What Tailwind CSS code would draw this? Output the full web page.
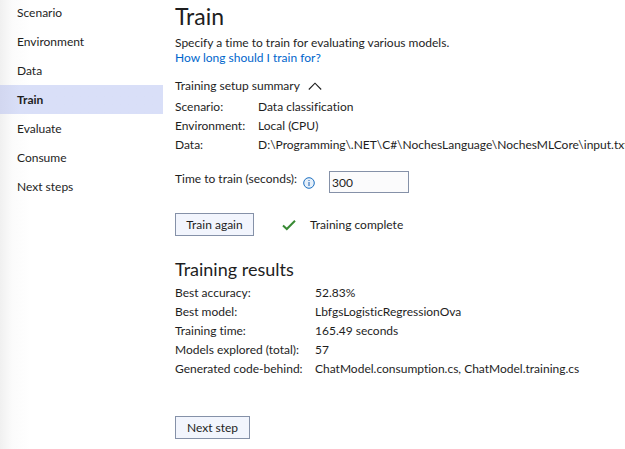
<!DOCTYPE html>
<html lang="en">
<head>
    <meta charset="UTF-8">
    <meta name="viewport" content="width=device-width, initial-scale=1.0">
    <title>Model Builder | Train</title>
    <script src="https://cdn.jsdelivr.net/npm/@tailwindcss/browser@4"></script>
</head>
<body class="bg-white text-[#1e1e1e] text-[12px] leading-[19px] font-['Lato','Open_Sans',sans-serif] [font-variant-ligatures:none]">

<div class="flex min-h-screen overflow-hidden">
    <nav class="w-[163px] shrink-0 bg-linear-to-r from-[#f0f0f0] via-[#fbfbfb] via-[12px] to-white to-[30px]">
        <ul class="-mt-0.5 leading-[29px]">
            <li><a href="#scenario" class="block pl-[17px]">Scenario</a></li>
            <li><a href="#environment" class="block pl-[17px]">Environment</a></li>
            <li><a href="#data" class="block pl-[17px]">Data</a></li>
            <li><a href="#train" aria-current="page" class="block pl-[17px] font-bold bg-linear-to-r from-[#d2d7f0] to-[#d9dff8] to-[20px]">Train</a></li>
            <li><a href="#evaluate" class="block pl-[17px]">Evaluate</a></li>
            <li><a href="#consume" class="block pl-[17px]">Consume</a></li>
            <li><a href="#next-steps" class="block pl-[17px]">Next steps</a></li>
        </ul>
    </nav>

    <main class="flex-1 min-w-0 pl-3 pt-0.5 whitespace-nowrap">
        <h1 class="text-[23px] leading-7">Train</h1>
        <div class="mt-[5px] leading-[15px]">
            <p>Specify a time to train for evaluating various models.</p>
            <a href="#help" class="block w-fit text-[#0066cc]">How long should I train for?</a>
        </div>

        <button type="button" aria-expanded="true" class="mt-2.5 flex h-5 items-center gap-2">
            Training setup summary
            <svg class="h-3.5 w-3.5" viewBox="0 0 14 14" fill="none" stroke="#1e1e1e" stroke-width="1.1">
                <path d="M.8 11.5 7 5.2l6.2 6.3"/>
            </svg>
        </button>
        <dl class="mt-0.5 grid grid-cols-[83px_1fr]">
            <dt>Scenario:</dt>
            <dd>Data classification</dd>
            <dt>Environment:</dt>
            <dd>Local (CPU)</dd>
            <dt>Data:</dt>
            <dd>D:\Programming\.NET\C#\NochesLanguage\NochesMLCore\input.txt</dd>
        </dl>

        <div class="mt-[17px] flex h-[22px]">
            <div class="flex w-[154px] justify-between pr-3.5">
                <label for="train-time" class="leading-4">Time to train (seconds):</label>
                <svg class="mt-1.5 h-3 w-3 shrink-0" viewBox="0 0 12 12" fill="none">
                    <circle cx="6" cy="6" r="5.3" fill="#e6f0fa" stroke="#1c6fc0"/>
                    <path d="M6 5v4M6 3v1" stroke="#1c5fb0"/>
                </svg>
            </div>
            <input id="train-time" type="text" value="300" class="w-20 border border-[#8591a8] bg-[#fbfbfc] px-0.5">
        </div>

        <div class="mt-5 flex h-[23px] items-center">
            <button type="button" class="h-full w-[79px] border border-[#8591a8] bg-[#f2f5fd]">Train again</button>
            <svg class="ml-7 h-3.5 w-3.5" viewBox="0 0 14 14" fill="none" stroke="#388a34" stroke-width="2">
                <path d="M1 7.5 4.8 11 13 2.8"/>
            </svg>
            <span class="ml-3.5">Training complete</span>
        </div>

        <h2 class="mt-5 text-[18px] leading-[27px]">Training results</h2>
        <dl class="grid grid-cols-[140px_1fr]">
            <dt>Best accuracy:</dt>
            <dd>52.83%</dd>
            <dt>Best model:</dt>
            <dd>LbfgsLogisticRegressionOva</dd>
            <dt>Training time:</dt>
            <dd>165.49 seconds</dd>
            <dt>Models explored (total):</dt>
            <dd>57</dd>
            <dt>Generated code-behind:</dt>
            <dd>ChatModel.consumption.cs, ChatModel.training.cs</dd>
        </dl>

        <button type="button" class="mt-[38px] h-[23px] w-[75px] border border-[#8591a8] bg-[#f2f5fd]">Next step</button>
    </main>
</div>

</body>
</html>
